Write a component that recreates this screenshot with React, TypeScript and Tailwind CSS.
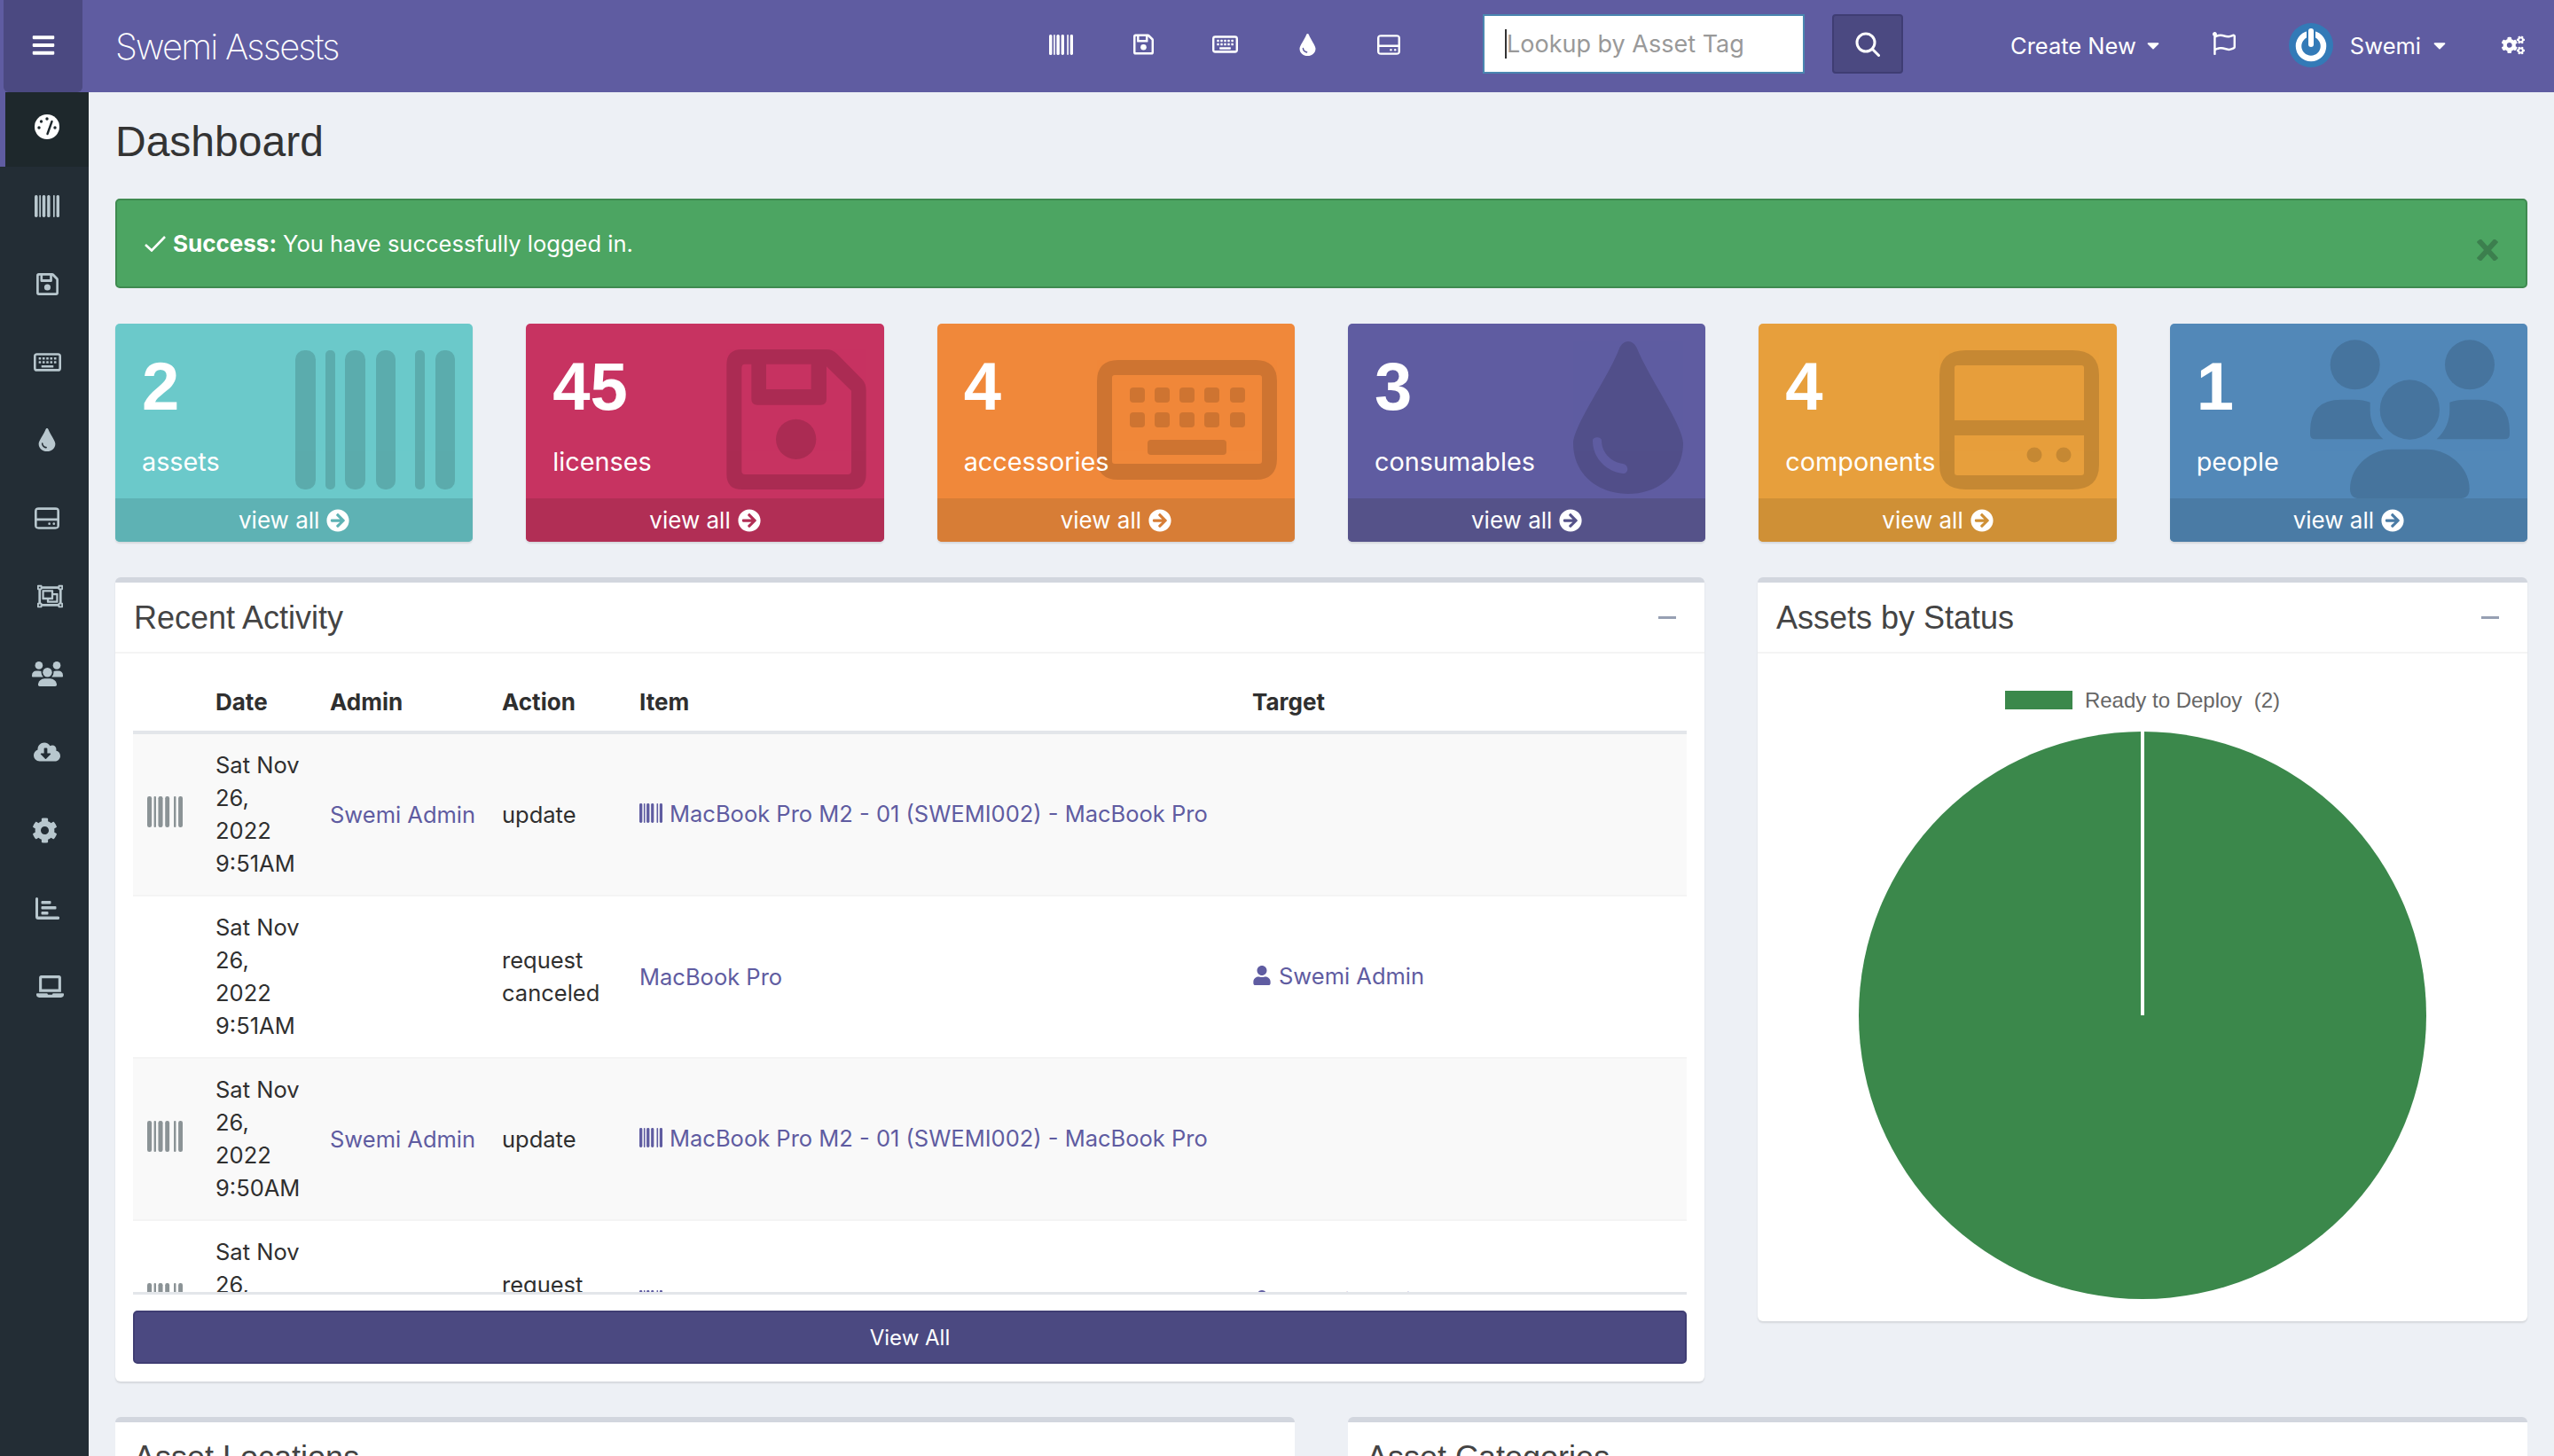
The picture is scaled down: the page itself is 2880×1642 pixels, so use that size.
import React from "react";
import {
  FaBars, FaRegObjectGroup, FaCloudDownloadAlt, FaCog, FaLaptop,
  FaRegFlag, FaCogs, FaCaretDown, FaArrowCircleRight, FaUser,
} from "react-icons/fa";

type P = { className?: string };

function Barcode({ className }: P) {
  const bars = [[0, 23], [34, 11], [56, 23], [91, 22], [135, 11], [158, 22]];
  return (
    <svg viewBox="0 0 180 157" preserveAspectRatio="none" className={className} fill="currentColor">
      {bars.map(([x, w], i) => (
        <rect key={i} x={x} y={0} width={w} height={157} rx={w / 2.2} />
      ))}
    </svg>
  );
}

function Save({ className }: P) {
  return (
    <svg viewBox="88 72 472 474" className={className} fill="currentColor">
      <path
        fillRule="evenodd"
        d="M140 72H425Q447 72 462 88L545 172Q560 187 560 210V494Q560 546 508 546H140Q88 546 88 494V124Q88 72 140 72ZM150 122Q139 122 139 135V483Q139 495 150 495H498Q510 495 510 483V212L426 130V240Q426 260 406 260H192Q172 260 172 240V122ZM222 122H374V207H222Z"
      />
      <circle cx="323" cy="376" r="68" />
    </svg>
  );
}

function Keyboard({ className }: P) {
  const xs = [37, 65, 93, 121, 150];
  return (
    <svg viewBox="0 0 203 135" className={className} fill="currentColor">
      <path
        fillRule="evenodd"
        d="M24 0H179Q203 0 203 24V111Q203 135 179 135H24Q0 135 0 111V24Q0 0 24 0ZM20 17Q17 17 17 20V114Q17 117 20 117H183Q186 117 186 114V20Q186 17 183 17Z"
      />
      {xs.map((x) => (
        <rect key={x} x={x} y={31} width={17} height={17} rx={4} />
      ))}
      {xs.map((x) => (
        <rect key={x + 1} x={x} y={59} width={17} height={17} rx={4} />
      ))}
      <rect x={57} y={90} width={89} height={17} rx={4} />
    </svg>
  );
}

function Drop({ className }: P) {
  return (
    <svg viewBox="0 0 124 172" className={className} fill="currentColor">
      <path
        fillRule="evenodd"
        d="M62 0C66 0 70 3 72 8C85 40 124 95 124 115C124 150 96 172 62 172C28 172 0 150 0 115C0 95 40 40 52 8C54 3 58 0 62 0ZM22 112C22 107 32 107 32 112C32 125 42 136 56 138C63 139 63 149 56 149C38 147 22 132 22 112Z"
      />
    </svg>
  );
}

function Hdd({ className }: P) {
  return (
    <svg viewBox="0 0 180 157" className={className} fill="currentColor">
      <path
        fillRule="evenodd"
        d="M30 0H150Q180 0 180 28V129Q180 157 150 157H30Q0 157 0 129V28Q0 0 30 0ZM20 17Q17 17 17 20V79H163V20Q163 17 160 17ZM17 96V138Q17 141 20 141H160Q163 141 163 138V96Z"
      />
      <circle cx="107" cy="118" r="8.5" />
      <circle cx="140" cy="118" r="8.5" />
    </svg>
  );
}

function Users({ className }: P) {
  return (
    <svg viewBox="45 40 675 540" className={className} fill="currentColor">
      <circle cx="197" cy="125" r="84" />
      <circle cx="585" cy="125" r="84" />
      <circle cx="382" cy="277" r="101" />
      <path d="M45 360Q45 377 62 377H292Q248 335 248 277V252Q225 243 195 243H150Q45 243 45 350Z" />
      <path d="M720 360Q720 377 703 377H473Q517 335 517 277V252Q540 243 570 243H615Q720 243 720 350Z" />
      <path d="M180 545Q180 578 213 578H550Q584 578 584 545C584 470 510 411 440 411H320C250 411 180 470 180 545Z" />
    </svg>
  );
}

function Gauge({ className }: P) {
  return (
    <svg viewBox="0 0 28 28" className={className}>
      <circle cx="14" cy="14" r="14" fill="currentColor" />
      <g fill="#1e282c">
        <circle cx="14" cy="5" r="1.7" />
        <circle cx="7.5" cy="8" r="1.7" />
        <circle cx="5" cy="15" r="1.7" />
        <circle cx="23" cy="15" r="1.7" />
      </g>
      <path d="M14.5 22L19.5 8" stroke="#1e282c" strokeWidth="2.4" strokeLinecap="round" />
    </svg>
  );
}

function Bars({ className }: P) {
  return (
    <svg viewBox="0 0 27 25" className={className} fill="currentColor">
      <path d="M0 1.5A1.5 1.5 0 0 1 3 1.5V21.5H25.5A1.5 1.5 0 0 1 25.5 25H3Q0 25 0 22Z" />
      <rect x="6.5" y="4" width="11" height="3.6" rx="1" />
      <rect x="6.5" y="10" width="17" height="3.6" rx="1" />
      <rect x="6.5" y="16" width="8" height="3.6" rx="1" />
    </svg>
  );
}

const sideItems = [
  <Barcode className="w-[28px] h-[25px]" />,
  <Save className="w-[25px] h-[25px]" />,
  <Keyboard className="w-[31px] h-[21px]" />,
  <Drop className="w-[20px] h-[26px]" />,
  <Hdd className="w-[28px] h-[25px]" />,
  <FaRegObjectGroup className="text-[29px] ml-[6px]" />,
  <Users className="w-[35px] h-[28px]" />,
  <FaCloudDownloadAlt className="text-[30px]" />,
  <FaCog className="text-[29px] -ml-[6px]" />,
  <Bars className="w-[27px] h-[25px]" />,
  <FaLaptop className="text-[31px] ml-[6px]" />,
];

const stats = [
  { n: "2", l: "assets", bg: "bg-[#6bc9ca]", fb: "bg-[#5eb2b4]", icon: <Barcode className="absolute left-[203px] top-[30px] w-[180px] h-[157px] text-black opacity-[0.14]" /> },
  { n: "45", l: "licenses", bg: "bg-[#c73361]", fb: "bg-[#b12e55]", icon: <Save className="absolute left-[226px] top-[29px] w-[158px] h-[158px] text-black opacity-[0.14]" /> },
  { n: "4", l: "accessories", bg: "bg-[#f0883a]", fb: "bg-[#d77d36]", icon: <Keyboard className="absolute left-[180px] top-[41px] w-[203px] h-[135px] text-black opacity-[0.14]" /> },
  { n: "3", l: "consumables", bg: "bg-[#5f5ca1]", fb: "bg-[#555289]", icon: <Drop className="absolute left-[254px] top-[20px] w-[124px] h-[172px] text-black opacity-[0.14]" /> },
  { n: "4", l: "components", bg: "bg-[#e79f3c]", fb: "bg-[#cf9036]", icon: <Hdd className="absolute left-[204px] top-[30px] w-[180px] h-[157px] text-black opacity-[0.14]" /> },
  { n: "1", l: "people", bg: "bg-[#5288b8]", fb: "bg-[#4a7ba5]", icon: <Users className="absolute left-[158px] top-[18px] w-[225px] h-[180px] text-black opacity-[0.14]" /> },
];

function Stat({ s }: { s: (typeof stats)[number] }) {
  return (
    <div className={`${s.bg} relative h-[246px] rounded-[5px] overflow-hidden text-white shadow-[0_2px_2px_rgba(0,0,0,0.1)] flex flex-col`}>
      {s.icon}
      <div className="relative h-[197px] px-[30px] pt-[31px]">
        <div className="font-['Liberation_Sans',sans-serif] font-bold text-[76px] leading-[80px]">{s.n}</div>
        <div className="mt-[27px] text-[28.8px] leading-[36px]">{s.l}</div>
      </div>
      <div className={`${s.fb} relative h-[49px] flex items-center justify-center gap-[8px] text-[26px]`}>
        view all <FaArrowCircleRight className="text-[26px]" />
      </div>
    </div>
  );
}

function BoxHeader({ title }: { title: string }) {
  return (
    <div className="h-[80px] flex items-center justify-between pl-[21px] pr-[32px] border-b-2 border-[#f4f4f4]">
      <div className="text-[36px] text-[#444] font-['Liberation_Sans',sans-serif]">{title}</div>
      <div className="w-[20px] h-[3px] bg-[#97a0b3]" />
    </div>
  );
}

const link = "text-[#5f5ca1]";

function AssetItem({ low }: { low?: boolean }) {
  return (
    <span className={`${link} inline-flex items-center gap-[8px] whitespace-nowrap`}>
      <Barcode className="w-[26px] h-[22px]" />
      <span className={low ? "translate-y-[4px]" : ""}>MacBook Pro M2 - 01 (SWEMI002) - MacBook Pro</span>
    </span>
  );
}

function Row({ time, striped, barcode, admin, action, item, target }: { time: string; striped?: boolean; barcode?: boolean; admin?: boolean; action: React.ReactNode; item: React.ReactNode; target?: boolean }) {
  const td = "px-[16px] pt-[16px] pb-[17px] align-middle";
  return (
    <tr className={`${striped ? "bg-[#f9f9f9]" : ""} border-t-2 border-[#f4f4f4]`}>
      <td className={`${td} text-[#8b9396]`}>{barcode && <Barcode className="w-[40px] h-[35px] -mt-[5px]" />}</td>
      <td className={td}>Sat Nov<br />26,<br />2022<br />{time}</td>
      <td className={`${td} ${link} whitespace-nowrap`}>{admin && "Swemi Admin"}</td>
      <td className={td}>{action}</td>
      <td className={td}>{item}</td>
      <td className={td}>
        {target && (
          <span className={`${link} inline-flex items-center gap-[8px]`}>
            <FaUser className="text-[22px]" /> Swemi Admin
          </span>
        )}
      </td>
    </tr>
  );
}

export default function App() {
  return (
    <div className="h-[1642px] w-[2880px] overflow-hidden bg-[#edf0f5] text-[#2f2f2f] text-[25.5px] leading-[37px] font-['Inter','Liberation_Sans',sans-serif]">
      <header className="h-[104px] bg-[#5f5ca1] text-white flex items-center relative">
        <div className="ml-[4px] w-[89px] h-[104px] bg-[#4b4981] rounded-b-[6px] flex items-center justify-center">
          <FaBars className="text-[28px] -mt-[2px]" />
        </div>
        <div className="ml-[37px] w-[1020px] text-[40px] font-[250] tracking-[-1.8px]">Swemi Assests</div>
        <div className="flex items-center w-[522px] -mt-[4px]">
          <div className="w-[93px] flex justify-center"><Barcode className="w-[27px] h-[23px]" /></div>
          <div className="w-[92px] flex justify-center"><Save className="w-[23px] h-[24px]" /></div>
          <div className="w-[93px] flex justify-center"><Keyboard className="w-[29px] h-[20px]" /></div>
          <div className="w-[92px] flex justify-center"><Drop className="w-[19px] h-[25px]" /></div>
          <div className="w-[92px] flex justify-center"><Hdd className="w-[26px] h-[23px]" /></div>
        </div>
        <div className="-mt-[5px] w-[363px] h-[67px] bg-white border-2 border-[#4a86b0] flex items-center pl-[23px] text-[#999] text-[27px]">
          <span className="border-l-2 border-[#333] leading-[33px] h-[33px]">Lookup by Asset Tag</span>
        </div>
        <div className="-mt-[5px] ml-[31px] w-[80px] h-[67px] bg-[#4b4981] border-2 border-[#3f3d73] rounded-[4px] flex items-center justify-center">
          <svg viewBox="0 0 28 28" className="w-[28px] h-[28px]" fill="none" stroke="currentColor" strokeWidth="3" strokeLinecap="round">
            <circle cx="12" cy="12" r="10" />
            <path d="M19.5 19.5L26.5 26.5" />
          </svg>
        </div>
        <div className="ml-[121px] flex items-center gap-[8px] -mt-[2px]">Create New <FaCaretDown className="text-[22px]" /></div>
        <FaRegFlag className="ml-[56px] text-[26px] -mt-[6px]" />
        <svg viewBox="0 0 50 50" className="ml-[60px] w-[50px] h-[50px] -mt-[2px]">
          <circle cx="25" cy="25" r="25" fill="#337ab7" />
          <circle cx="25" cy="26" r="14" fill="none" stroke="white" strokeWidth="6.5" />
          <path d="M25 9V25" stroke="#337ab7" strokeWidth="10" />
          <path d="M25 9V24" stroke="white" strokeWidth="6" strokeLinecap="round" />
        </svg>
        <div className="ml-[19px] flex items-center gap-[10px] -mt-[2px]">Swemi <FaCaretDown className="text-[22px]" /></div>
        <FaCogs className="ml-[59px] text-[26px] -mt-[3px]" />
      </header>

      <div className="flex h-[1538px]">
        <aside className="w-[100px] shrink-0 bg-[#232d35] text-[#b8c7ce]">
          <div className="h-[84px] pb-[6px] bg-[#1e282c] border-l-[6px] border-[#5f5ca1] text-white flex items-center justify-center">
            <Gauge className="w-[28px] h-[28px]" />
          </div>
          {sideItems.map((icon, i) => (
            <div key={i} className="h-[88px] flex items-center justify-center pl-[6px]">{icon}</div>
          ))}
        </aside>

        <main className="flex-1 px-[30px]">
          <h1 className="h-[110px] flex items-center text-[48px] font-normal text-[#333] font-['Liberation_Sans',sans-serif]">Dashboard</h1>

          <div className="mt-[10px] h-[101px] bg-[#4ca562] border-2 border-[#3f8a50] rounded-[5px] text-white flex items-center pl-[31px] pr-[31px]">
            <svg viewBox="0 0 24 18" className="w-[24px] h-[18px] mr-[8px]" fill="none" stroke="currentColor" strokeWidth="2.6">
              <path d="M1 10L8 16.5L23 1" />
            </svg>
            <b className="mr-[7px] text-[26px]">Success:</b> You have successfully logged in.
            <svg viewBox="0 0 24 24" className="ml-auto mt-[15px] w-[24px] h-[24px]" stroke="#3c7f4e" strokeWidth="6">
              <path d="M2 1L22 23M22 1L2 23" />
            </svg>
          </div>

          <div className="mt-[40px] grid grid-cols-6 gap-x-[60px]">
            {stats.map((s) => <Stat key={s.l} s={s} />)}
          </div>

          <div className="mt-[40px] flex items-start gap-[60px]">
            <section className="w-[1792px] h-[907px] bg-white rounded-[6px] border-t-[6px] border-[#d2d6de] shadow-[0_2px_2px_rgba(0,0,0,0.1)]">
              <BoxHeader title="Recent Activity" />
              <div className="px-[20px] pt-[20px]">
                <div className="h-[703px] overflow-hidden border-b-[3px] border-[#e3e6ea]">
                  <table className="w-full table-fixed border-collapse text-left">
                    <colgroup>
                      <col className="w-[77px]" /><col className="w-[129px]" /><col className="w-[194px]" /><col className="w-[155px]" /><col className="w-[691px]" /><col />
                    </colgroup>
                    <thead>
                      <tr className="h-[69px] border-b-[4px] border-[#e3e6ea]">
                        {["", "Date", "Admin", "Action", "Item", "Target"].map((h) => (
                          <th key={h} className="px-[16px] pt-[2px] font-bold text-[26px]">{h}</th>
                        ))}
                      </tr>
                    </thead>
                    <tbody>
                      <Row striped barcode admin time="9:51AM" action="update" item={<AssetItem />} />
                      <Row time="9:51AM" action={<>request<br />canceled</>} item={<span className={link}>MacBook Pro</span>} target />
                      <Row striped barcode admin time="9:50AM" action="update" item={<AssetItem />} />
                      <Row barcode time="9:50AM" action={<>request<br />canceled</>} item={<AssetItem low />} target />
                    </tbody>
                  </table>
                </div>
                <div className="mt-[18px] h-[60px] bg-[#4b4981] border-2 border-[#3f3d73] rounded-[5px] text-white text-[24px] flex items-center justify-center">View All</div>
              </div>
            </section>

            <section className="w-[868px] h-[839px] bg-white rounded-[6px] border-t-[6px] border-[#d2d6de] shadow-[0_2px_2px_rgba(0,0,0,0.1)]">
              <BoxHeader title="Assets by Status" />
              <div className="mt-[41px] h-[22px] flex items-center justify-center gap-[14px] text-[24px] text-[#666] font-['Liberation_Sans',sans-serif]">
                <span className="w-[76px] h-[21px] bg-[#3b884b]" />
                Ready to Deploy&nbsp;&nbsp;(2)
              </div>
              <svg viewBox="0 0 640 640" className="mt-[25px] mx-auto w-[640px] h-[640px]">
                <circle cx="320" cy="320" r="320" fill="#3b884b" />
                <path d="M320 0V320" stroke="white" strokeWidth="4" />
              </svg>
            </section>
          </div>

          <div className="mt-[40px] grid grid-cols-2 gap-x-[60px]">
            <section className="h-[300px] bg-white rounded-[6px] border-t-[6px] border-[#d2d6de]"><BoxHeader title="Asset Locations" /></section>
            <section className="h-[300px] bg-white rounded-[6px] border-t-[6px] border-[#d2d6de]"><BoxHeader title="Asset Categories" /></section>
          </div>
        </main>
      </div>
    </div>
  );
}
